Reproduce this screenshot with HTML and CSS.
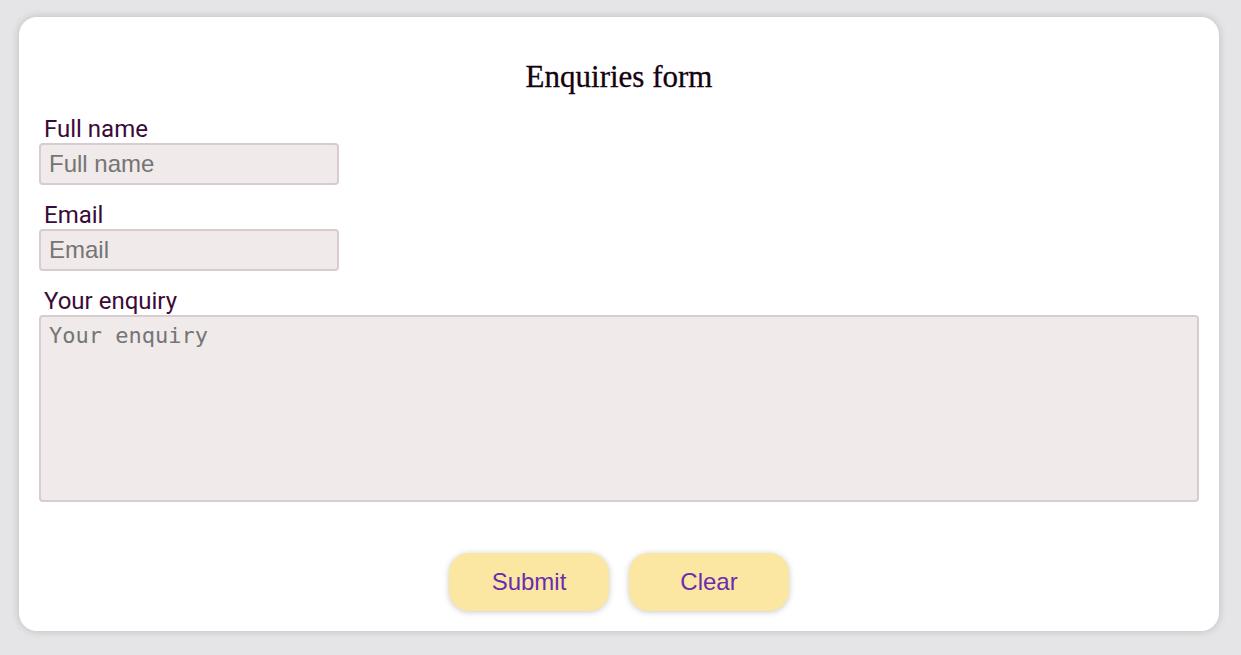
FILE: index.html
```html
<!DOCTYPE html>
<html lang="en">
<head>
<meta charset="utf-8">
<title>Enquiries form</title>
<link rel="stylesheet" href="styles.css">
</head>
<body>
<main class="card">
  <h1 class="title">Enquiries form</h1>
  <form class="form">
    <div class="field">
      <label class="label" for="name">Full name</label>
      <input class="input" id="name" type="text" placeholder="Full name">
    </div>
    <div class="field">
      <label class="label" for="email">Email</label>
      <input class="input" id="email" type="email" placeholder="Email">
    </div>
    <div class="field">
      <label class="label" for="enquiry">Your enquiry</label>
      <textarea class="textarea" id="enquiry" placeholder="Your enquiry"></textarea>
    </div>
    <div class="actions">
      <button type="submit" class="btn">Submit</button>
      <button type="reset" class="btn">Clear</button>
    </div>
  </form>
</main>
</body>
</html>
```

FILE: styles.css
```css
html, body {
  margin: 0;
  padding: 0;
}
body {
  background: #e5e5e7;
  padding: 17px 0 0 19px;
  height: 655px;
  box-sizing: border-box;
  overflow: hidden;
}
.card {
  width: 1200px;
  height: 614px;
  box-sizing: border-box;
  background: #ffffff;
  border-radius: 18px;
  box-shadow: 0 0 8px rgba(0, 0, 0, 0.18);
  padding: 42px 20px 20px;
}
.title {
  margin: 0 0 20px;
  text-align: center;
  font-family: "Liberation Serif", "Times New Roman", serif;
  font-weight: normal;
  font-size: 31px;
  line-height: normal;
  color: #14020e;
  -webkit-text-stroke: 0.3px #14020e;
}
.form {
  display: flex;
  flex-direction: column;
}
.field {
  display: flex;
  flex-direction: column;
  align-items: flex-start;
  margin-bottom: 16px;
}
.label {
  font-family: Roboto, "Liberation Sans", sans-serif;
  font-size: 24px;
  line-height: normal;
  color: #3a0a38;
  padding-left: 5px;
}
.input {
  box-sizing: border-box;
  width: 300px;
  height: 42px;
  margin: 0;
  padding: 0 8px;
  border: 2px solid #d7ccd0;
  border-radius: 4px;
  background: #f0eaea;
  font-family: "Liberation Sans", Arial, sans-serif;
  font-size: 24px;
  color: #222;
  outline: none;
}
.textarea {
  box-sizing: border-box;
  width: 1160px;
  height: 187px;
  margin: 0;
  padding: 6px 8px;
  border: 2px solid #d7ccd0;
  border-radius: 4px;
  background: #f0eaea;
  font-family: "DejaVu Sans Mono", monospace;
  font-size: 22px;
  resize: none;
  outline: none;
}
.input::placeholder,
.textarea::placeholder {
  color: #757575;
}
.actions {
  display: flex;
  justify-content: center;
  gap: 20px;
  margin-top: 35px;
}
.btn {
  width: 160px;
  height: 58px;
  border: none;
  border-radius: 20px;
  background: #fbe7a1;
  box-shadow: 0 1px 6px rgba(0, 0, 0, 0.22);
  color: #6a2db0;
  font-family: "Liberation Sans", Arial, sans-serif;
  font-size: 24px;
  cursor: pointer;
}
```
